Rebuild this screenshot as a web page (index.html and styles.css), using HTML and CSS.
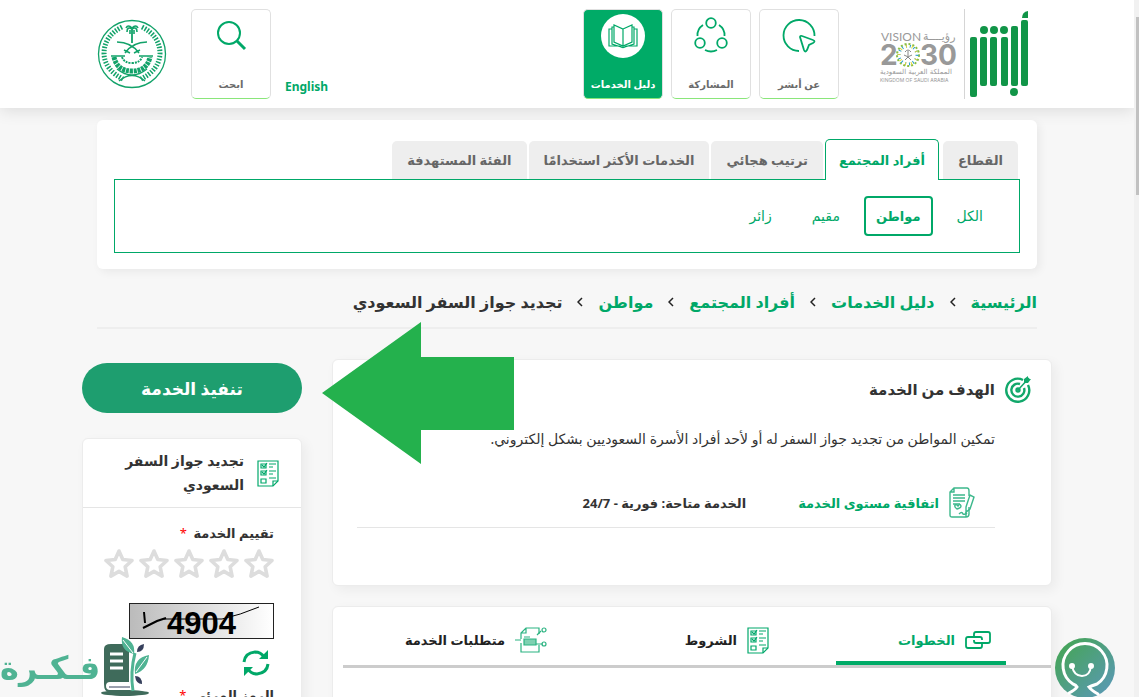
FILE: index.html
```html
<!DOCTYPE html>
<html lang="ar" dir="rtl">
<head>
    <meta charset="UTF-8">
    <meta name="viewport" content="width=device-width, initial-scale=1.0">
    <title>تجديد جواز السفر السعودي</title>
    <link rel="stylesheet" href="styles.css">
</head>
<body>

    <!-- Shared icons -->
    <svg class="sprite" aria-hidden="true">
        <symbol id="checklist" viewBox="0 0 22 27">
            <g fill="none" stroke="#00a86b" stroke-width="1.2">
                <path d="M1 1h20v20l-5 5H1z"/>
                <path d="M16 26v-5h5"/>
                <path d="M4 4h5v4H4zM4 11h5v4H4zM4 19h5v4H4z"/>
                <path d="M5 5l2 2 3-4M5 12l2 2 3-4M12 4h7M12 7h4M12 11h7M12 14h4M12 18h7"/>
            </g>
        </symbol>
        <symbol id="star" viewBox="0 0 30 30">
            <path d="M15 2l3.800 8.500 9.200 1-6.800 6.300 1.900 9.300-8.100-4.700-8.100 4.700 1.900-9.300L2 11.500l9.200-1z" fill="none" stroke="#ddd" stroke-width="3.600" stroke-linejoin="round"/>
        </symbol>
    </svg>

    <!-- Header -->
    <header class="header">
        <div class="container header-inner">
            <a class="logo" href="#" aria-label="أبشر">
                <svg width="59" height="88" viewBox="0 0 59 88" fill="#119548">
                    <path d="M52 7q0-6 6-7v7z"/>
                    <rect x="51" y="9" width="7" height="66" rx="2"/>
                    <rect x="41" y="15" width="7" height="60" rx="2"/>
                    <rect x="31" y="26" width="7" height="49" rx="2"/>
                    <rect x="20" y="26" width="7" height="49" rx="2"/>
                    <rect x="10" y="26" width="7" height="49" rx="2"/>
                    <rect x="0" y="26" width="7" height="60" rx="2"/>
                    <circle cx="14" cy="19" r="4"/>
                    <circle cx="24" cy="19" r="4"/>
                    <circle cx="34" cy="19" r="4"/>
                    <circle cx="44" cy="81" r="4"/>
                </svg>
            </a>
            <div class="vision" dir="ltr">
                <svg width="77" height="56" viewBox="0 0 77 56" fill="#999">
                    <text x="1" y="12" class="v-title">VISION</text>
                    <text x="43" y="11" class="v-arabic">رؤيــــة</text>
                    <text x="0" y="36" class="v-year">2</text>
                    <text x="40" y="36" class="v-year">30</text>
                    <g fill="none" stroke-width="3">
                        <circle cx="28" cy="26" r="11" stroke="#8bbf3f" stroke-dasharray="2 2" stroke-width="2"/>
                        <circle cx="28" cy="26" r="9" stroke="#2a9fc9" stroke-dasharray="1 3"/>
                        <circle cx="28" cy="26" r="9" stroke="#e4d534" stroke-dasharray="1 5" stroke-dashoffset="2"/>
                        <path d="M28 29v-7M25 23q3-4 6 0M24 26q4 1 7 5M32 26q-4 1-7 5" stroke="#888" stroke-width="1"/>
                    </g>
                    <text x="0" y="45" class="v-small">المملكة العربية السعودية</text>
                    <text x="0" y="53" class="v-tiny">KINGDOM OF SAUDI ARABIA</text>
                </svg>
            </div>

            <nav class="nav">
                <a class="nav-tile" href="#">
                    <svg class="nav-icon" viewBox="0 0 40 40" fill="none" stroke="#00a868" stroke-width="1.8">
                        <path d="M20 35A15.500 15.500 0 1 1 35.500 20"/>
                        <path d="M21 21q0-1.500 2-1l11 4q3 1 0 3l-4 2-2 5q-2 3-3 0z"/>
                    </svg>
                    <span>عن أبشر</span>
                </a>
                <a class="nav-tile" href="#">
                    <svg class="nav-icon" viewBox="0 0 40 40" fill="none" stroke="#00a868" stroke-width="1.8">
                        <circle cx="20" cy="7" r="4.800"/>
                        <circle cx="9" cy="27" r="4.800"/>
                        <circle cx="31" cy="27" r="4.800"/>
                        <path d="M12 9Q6 13 6.500 20M28 9q6 4 5.500 11M14 34q6 3 12 0"/>
                    </svg>
                    <span>المشاركة</span>
                </a>
                <a class="nav-tile active" href="#">
                    <svg class="nav-icon round" viewBox="0 0 44 44" fill="none" stroke="#00a868" stroke-width="1.2">
                        <path d="M22 15l9-4v17l-9 4-9-4V11zM22 15v17"/>
                        <path d="M13 13h-2v17l9 3h4l9-3V13h-2M11 15H8v17h11q3 3 6 0h11V15h-3"/>
                    </svg>
                    <span>دليل الخدمات</span>
                </a>
            </nav>

            <a class="lang" href="#" lang="en">English</a>
            <a class="nav-tile search" href="#">
                <svg class="nav-icon" viewBox="0 0 40 40" fill="none" stroke="#00a868">
                    <circle cx="18" cy="17" r="11" stroke-width="2"/>
                    <path d="M26 25l8 8" stroke-width="3"/>
                </svg>
                <span>ابحث</span>
            </a>
            <svg class="emblem" viewBox="0 0 70 70" fill="none" stroke="#12a269">
                <circle cx="35" cy="35" r="33.500" stroke-width="1.300"/>
                <path d="M25 8Q7 17 7 35q1 16 19 25M45 8q18 9 18 27-1 16-19 25" stroke-width="5" stroke-dasharray="1.500 1.500"/>
                <path d="M35 24V10" stroke-width="1.800"/>
                <path d="M35 10q-5-3-5 3M35 10q5-3 5 3M35 9q-4-4-6 0M35 9q4-4 6 0M33 11v4M37 11v4" stroke-width="1.600"/>
                <path d="M20 23q14 0 22 11M50 23q-14 0-22 11M27 31l6 3M43 31l-6 3" stroke-width="1.500"/>
                <path d="M17 38q3 14 18 14t18-14" stroke-width="5" stroke-dasharray="3 .8"/>
                <path d="M25 38q2 6 10 6t10-6" stroke-width="2" stroke-dasharray="2 1"/>
                <path d="M14 37h14M42 37h14M20 50q15 12 30 0M22 62q13-11 26 0" stroke-width="1.400"/>
            </svg>
        </div>
    </header>

    <!-- Service filter -->
    <section class="container filter">
        <div class="tabs">
            <button class="tab" type="button">القطاع</button>
            <button class="tab active" type="button">أفراد المجتمع</button>
            <button class="tab" type="button">ترتيب هجائي</button>
            <button class="tab" type="button">الخدمات الأكثر استخدامًا</button>
            <button class="tab" type="button">الفئة المستهدفة</button>
        </div>
        <div class="tab-panel">
            <a class="chip" href="#">الكل</a>
            <a class="chip active" href="#">مواطن</a>
            <a class="chip" href="#">مقيم</a>
            <a class="chip" href="#">زائر</a>
        </div>
    </section>

    <!-- Breadcrumb -->
    <nav class="container breadcrumb">
        <a href="#">الرئيسية</a>
        <svg class="sep" viewBox="0 0 6 10"><path d="M5 1L1 5l4 4"/></svg>
        <a href="#">دليل الخدمات</a>
        <svg class="sep" viewBox="0 0 6 10"><path d="M5 1L1 5l4 4"/></svg>
        <a href="#">أفراد المجتمع</a>
        <svg class="sep" viewBox="0 0 6 10"><path d="M5 1L1 5l4 4"/></svg>
        <a href="#">مواطن</a>
        <svg class="sep" viewBox="0 0 6 10"><path d="M5 1L1 5l4 4"/></svg>
        <span>تجديد جواز السفر السعودي</span>
    </nav>

    <!-- Service details -->
    <main class="service">
        <div class="main-col">
            <section class="card goal">
                <h2 class="goal-title">
                    <svg width="26" height="28" viewBox="0 0 26 28" fill="none" stroke="#12a86b" stroke-width="2.400">
                        <path d="M18 5A11.500 11.500 0 1 0 23 10"/>
                        <path d="M15 9a6.500 6.500 0 1 0 4 4"/>
                        <circle cx="13" cy="15" r="1.500"/>
                        <path d="M13 15L24 3" stroke-width="1.500"/>
                        <path d="M19 8V4l4-3v3h3l-3 4z" fill="#12a86b" stroke="none"/>
                    </svg>
                    الهدف من الخدمة
                </h2>
                <p class="goal-text">تمكين المواطن من تجديد جواز السفر له أو لأحد أفراد الأسرة السعوديين بشكل إلكتروني.</p>
                <div class="goal-meta">
                    <a class="sla" href="#">
                        <svg width="26" height="31" viewBox="0 0 26 31" fill="none" stroke="#3db88c" stroke-width="1.400">
                            <path d="M17 25v5H3q-2 0-2-2V5l4-4h13q2 0 2 3v5M1 5h4V1M20 20v7q0 3-3 3"/>
                            <path d="M4 8h12M4 11h12M4 14h12M4 17h7"/>
                            <path d="M8 22q-3-2-2-4 2-1 3 1 2-3 3 0 0 2-4 3zM10 27q3-3 4 0 2 1 4-1"/>
                            <path d="M17 20l4-12 4 2-4 12-4 3z"/>
                        </svg>
                        اتفاقية مستوى الخدمة
                    </a>
                    <span class="avail">الخدمة متاحة: فورية - 24/7</span>
                </div>
            </section>

            <section class="card steps">
                <div class="step-tabs">
                    <button class="step-tab active" type="button">
                        <svg width="26" height="18" viewBox="0 0 26 18" fill="none" stroke="#00a868" stroke-width="1.800">
                            <path d="M9 5V3q0-2 2-2h12q2 0 2 2v7q0 2-2 2H11q-2 0-2-2V9"/>
                            <path d="M17 13v2q0 2-2 2H3q-2 0-2-2V8q0-2 2-2h12q2 0 2 2v1"/>
                        </svg>
                        الخطوات
                    </button>
                    <button class="step-tab" type="button">
                        <svg width="22" height="27"><use href="#checklist"/></svg>
                        الشروط
                    </button>
                    <button class="step-tab" type="button">
                        <svg width="32" height="26" viewBox="0 0 32 26" fill="none" stroke="#2bb381" stroke-width="1.200">
                            <path d="M24 7V1H11L6 6v6M6 16v9h18v-7M11 1v5H6"/>
                            <path d="M9 10h6M0 13h6M22 8l4-4M20 17h8"/>
                            <path d="M9 12h12v6H9z" fill="#7fd0b1"/>
                            <circle cx="29" cy="3" r="2"/>
                            <circle cx="29" cy="17" r="2"/>
                        </svg>
                        متطلبات الخدمة
                    </button>
                </div>
            </section>
        </div>

        <aside class="side-col">
            <button class="run-btn" type="button">تنفيذ الخدمة</button>
            <form class="card rate">
                <h3 class="rate-title">
                    <svg width="22" height="27"><use href="#checklist"/></svg>
                    <span>تجديد جواز السفر السعودي</span>
                </h3>
                <div class="rate-body">
                    <p class="field-label">تقييم الخدمة <span class="req">*</span></p>
                    <div class="stars">
                        <label><input type="radio" name="rate" aria-label="1"><svg><use href="#star"/></svg></label>
                        <label><input type="radio" name="rate" aria-label="2"><svg><use href="#star"/></svg></label>
                        <label><input type="radio" name="rate" aria-label="3"><svg><use href="#star"/></svg></label>
                        <label><input type="radio" name="rate" aria-label="4"><svg><use href="#star"/></svg></label>
                        <label><input type="radio" name="rate" aria-label="5"><svg><use href="#star"/></svg></label>
                    </div>
                    <svg class="captcha" viewBox="0 0 143 34" direction="ltr">
                        <text x="37" y="30" class="captcha-text">4904</text>
                        <path d="M14 8l1 11M13 24l14-7 9-3" fill="none" stroke="#000" stroke-width="2"/>
                        <path d="M34 15h58q18-4 37-12" fill="none" stroke="#000"/>
                    </svg>
                    <button class="refresh" type="button" aria-label="تحديث">
                        <svg width="28" height="28" viewBox="0 0 28 28" fill="none" stroke="#00a868" stroke-width="3">
                            <path d="M2 13Q3 4 13 3q6 0 9 5M26 15q-1 9-11 10-6 0-9-5"/>
                            <path d="M26 1v9h-9zM2 27v-9h9z" fill="#00a868" stroke="none"/>
                        </svg>
                    </button>
                    <label class="field-label" for="code">الرمز المرئي <span class="req">*</span></label>
                    <input class="code" id="code" type="text">
                </div>
            </form>
        </aside>

        <svg class="pointer" viewBox="0 0 192 142"><path d="M0 71L99 0v35h93v73H99v34z" fill="#24b14d"/></svg>
    </main>

    <!-- Watermark -->
    <div class="watermark">
        <svg width="50" height="60" viewBox="0 0 50 60">
            <ellipse cx="25" cy="56" rx="24" ry="3" fill="#3f6b5b"/>
            <path d="M4 12q0-5 7-5h18v38H10q-4 0-4 4t4 4h20v2H9q-5 0-5-8z" fill="#3f6b5b"/>
            <path d="M10 46h20v7H10q-3-3 0-7z" fill="#fff"/>
            <path d="M9 50h21" stroke="#36405c"/>
            <path d="M10 17h13M10 24h13M10 31h13" stroke="#fff" stroke-width="3"/>
            <path d="M33 54q-3-19 2-38" fill="none" stroke="#4fb393" stroke-width="3"/>
            <path d="M34 17Q20 14 22 0q14 4 12 17zM35 37q-2-16 14-19-1 15-14 19z" fill="#4fb393"/>
            <path d="M37 15q0-7 7-8 0 8-7 8zM42 47q-6 0-7-8 7 0 7 8z" fill="#36405c"/>
            <path d="M23 3l10 13M47 20L36 35" stroke="#fff"/>
        </svg>
        <span>فـكـرة</span>
    </div>

    <!-- Chat assistant -->
    <button class="chat" type="button" aria-label="المساعد">
        <svg viewBox="0 0 60 60" fill="none" stroke="#fff" stroke-width="3" stroke-linecap="round">
            <path d="M14 55q6-3 8-6-1-2-4-3A22 22 0 1 1 42 46q-6 2-8 3 2 3 9 7"/>
            <path d="M17 28q2 10 10 10t9-10" stroke-width="2"/>
            <circle cx="17" cy="28" r="2" fill="#fff" stroke-width="2"/>
            <circle cx="36" cy="28" r="2" fill="#fff" stroke-width="2"/>
        </svg>
    </button>

    <div class="scrollbar"><div class="scroll-thumb"></div></div>

</body>
</html>
```
FILE: styles.css
```css
/* Global Styles */
* {
    margin: 0;
    padding: 0;
    box-sizing: border-box;
}

body {
    font-family: "Noto Sans", "DejaVu Sans", sans-serif;
    font-size: 14px;
    color: #333;
    background-color: #f7f7f7;
    padding-right: 5px;
    height: 100vh;
    overflow: hidden;
}

a {
    color: #00a868;
    text-decoration: none;
}

button {
    font-family: inherit;
    cursor: pointer;
    border: none;
    background: none;
}

svg {
    flex-shrink: 0;
}

.sprite {
    display: none;
}

.container {
    max-width: 940px;
    margin: 0 auto;
}

.card {
    background-color: #fff;
    border: 1px solid #ececec;
    border-radius: 6px;
    box-shadow: 4px 4px 12px rgba(0,0,0,0.05);
}

/* Header */
.header {
    background-color: #fff;
    height: 108px;
    box-shadow: 0 2px 16px rgba(0,0,0,0.12);
}

.header-inner {
    display: flex;
    align-items: flex-start;
    padding: 9px 8px 0 0;
}

.logo {
    height: 90px;
    padding: 2px 0 0 5px;
    border-left: 1px solid #d5d5d5;
}

.vision {
    margin: 20px 7px 0 41px;
}

.vision svg {
    display: block;
    overflow: visible;
}

.v-title {
    font: 12px Lato, sans-serif;
}

.v-arabic {
    font: 11px "DejaVu Sans", sans-serif;
}

.v-year {
    font: bold 28px Inter, sans-serif;
}

.v-small {
    font: 7px "DejaVu Sans", sans-serif;
}

.v-tiny {
    font: 5px Inter, sans-serif;
}

.nav {
    display: flex;
    gap: 8px;
}

.nav-tile {
    width: 80px;
    height: 90px;
    display: flex;
    flex-direction: column;
    align-items: center;
    justify-content: space-between;
    padding: 6px 0;
    border: 1px solid #e0e0e0;
    border-bottom-color: #8ae67a;
    border-radius: 5px;
    color: #6b6b6b;
    font-size: 10px;
    font-weight: bold;
    line-height: 16px;
    white-space: nowrap;
}

.nav-icon {
    width: 40px;
    height: 40px;
}

.nav-tile.active {
    background-color: #00ab67;
    color: #fff;
    padding-top: 4px;
}

.nav-icon.round {
    width: 44px;
    height: 44px;
    border-radius: 50%;
    background-color: #fff;
}

.lang {
    margin: 69px auto 0 14px;
    font-size: 12px;
    font-weight: bold;
}

.emblem {
    width: 70px;
    height: 70px;
    margin: 10px 24px 0 0;
}

/* Filter */
.filter {
    margin-top: 12px;
    padding: 19px 17px 16px;
    background-color: #fff;
    border-radius: 6px;
    box-shadow: 3px 3px 10px rgba(0,0,0,0.06);
}

.tabs {
    display: flex;
    align-items: flex-end;
    gap: 2px;
    padding-right: 2px;
}

.tab {
    height: 38px;
    padding: 0 15px;
    background-color: #eee;
    border-radius: 5px 5px 0 0;
    color: #666;
    font-size: 13px;
    font-weight: bold;
    white-space: nowrap;
}

.tab.active {
    height: 41px;
    margin: 0 2px -1px 0;
    padding: 0 13px;
    background-color: #fff;
    border: 1px solid #00a868;
    border-bottom: none;
    color: #00a868;
}

.tab-panel {
    display: flex;
    gap: 8px;
    padding: 16px 20px;
    border: 1px solid #00a868;
}

.chip {
    height: 40px;
    padding: 0 14px;
    border: 2px solid transparent;
    border-radius: 4px;
    font-size: 14px;
    line-height: 36px;
}

.chip.active {
    padding: 0 10px;
    border-color: #00a868;
    font-size: 13px;
    font-weight: bold;
}

/* Breadcrumb */
.breadcrumb {
    display: flex;
    align-items: center;
    gap: 15px;
    height: 60px;
    padding-top: 8px;
    border-bottom: 2px solid #eee;
    font-size: 16px;
    font-weight: bold;
    white-space: nowrap;
}

.sep {
    width: 6px;
    height: 10px;
    fill: none;
    stroke: #222;
    stroke-width: 1.5;
}

/* Service details */
.service {
    position: relative;
    display: flex;
    gap: 30px;
    max-width: 970px;
    margin: 30px auto 0;
}

.main-col {
    flex: 1;
}

.side-col {
    width: 220px;
    padding-top: 4px;
}

.goal {
    height: 227px;
    padding: 15px 20px 0 24px;
}

.goal-title {
    display: flex;
    align-items: center;
    gap: 10px;
    font-size: 15px;
}

.goal-text {
    margin: 22px 36px 0 0;
    font-size: 14px;
    line-height: 28px;
    white-space: nowrap;
}

.goal-meta {
    display: flex;
    align-items: center;
    gap: 52px;
    margin: 34px 36px 0 0;
    padding: 0 20px 9px 0;
    border-bottom: 1px solid #e5e5e5;
    font-size: 13px;
    font-weight: bold;
    white-space: nowrap;
}

.sla {
    display: flex;
    align-items: center;
    gap: 10px;
}

.steps {
    height: 200px;
    margin-top: 20px;
}

.step-tabs {
    display: flex;
    gap: 52px;
    margin-left: 10px;
    padding: 12px 45px 0 0;
    border-bottom: 3px solid #ccc;
}

.step-tab {
    width: 170px;
    height: 46px;
    padding-right: 15px;
    display: flex;
    align-items: center;
    gap: 10px;
    border-bottom: 4px solid transparent;
    color: #222;
    font-size: 13px;
    font-weight: bold;
    white-space: nowrap;
}

.step-tab.active {
    border-bottom-color: #00ab67;
    color: #00a868;
}

/* Sidebar */
.run-btn {
    width: 100%;
    height: 50px;
    border-radius: 25px;
    background-color: #1e9e6f;
    color: #fff;
    font-size: 17px;
    font-weight: bold;
}

.rate {
    margin-top: 25px;
}

.rate-title {
    display: flex;
    align-items: center;
    gap: 13px;
    padding: 10px 22px 10px 20px;
    border-bottom: 1px solid #e5e5e5;
    font-size: 14px;
    line-height: 24px;
}

.rate-body {
    padding: 14px 27px 0 19px;
}

.field-label {
    display: block;
    font-size: 13px;
    font-weight: bold;
    line-height: 22px;
}

.req {
    margin-right: 3px;
    color: #f00;
    font-weight: normal;
}

.stars {
    display: flex;
    gap: 5px;
    margin-top: 5px;
}

.stars label {
    display: flex;
    cursor: pointer;
}

.stars input {
    appearance: none;
    width: 0;
}

.stars svg {
    width: 30px;
    height: 30px;
}

.captcha {
    display: block;
    width: 145px;
    height: 36px;
    margin-top: 24px;
    border: 1px solid #222;
    background: linear-gradient(to right, #bbb, #fff);
}

.captcha-text {
    font: bold 31px "Liberation Sans", sans-serif;
}

.refresh {
    display: block;
    margin: 10px 4px 7px 0;
}

.refresh svg {
    display: block;
}

.code {
    width: 100%;
    height: 34px;
    border: 1px solid #ccc;
}

/* Arrow that points at the run button */
.pointer {
    position: absolute;
    top: -37px;
    left: 240px;
    width: 192px;
    height: 142px;
}

/* Overlays */
.watermark {
    position: fixed;
    left: 0;
    bottom: 0;
    display: flex;
    align-items: center;
    color: #4fb393;
    font-size: 32px;
    font-weight: bold;
    line-height: 60px;
}

.chat {
    position: fixed;
    right: 24px;
    bottom: -1px;
    width: 60px;
    height: 60px;
    border-radius: 50%;
    background: linear-gradient(135deg, #43a64c, #5c98bd);
}

.scrollbar {
    position: fixed;
    top: 0;
    right: 0;
    width: 5px;
    height: 100vh;
    padding: 17px 0 0 2px;
    background-color: #f1f1f1;
}

.scroll-thumb {
    height: 178px;
    background-color: #c1c1c1;
}
```
